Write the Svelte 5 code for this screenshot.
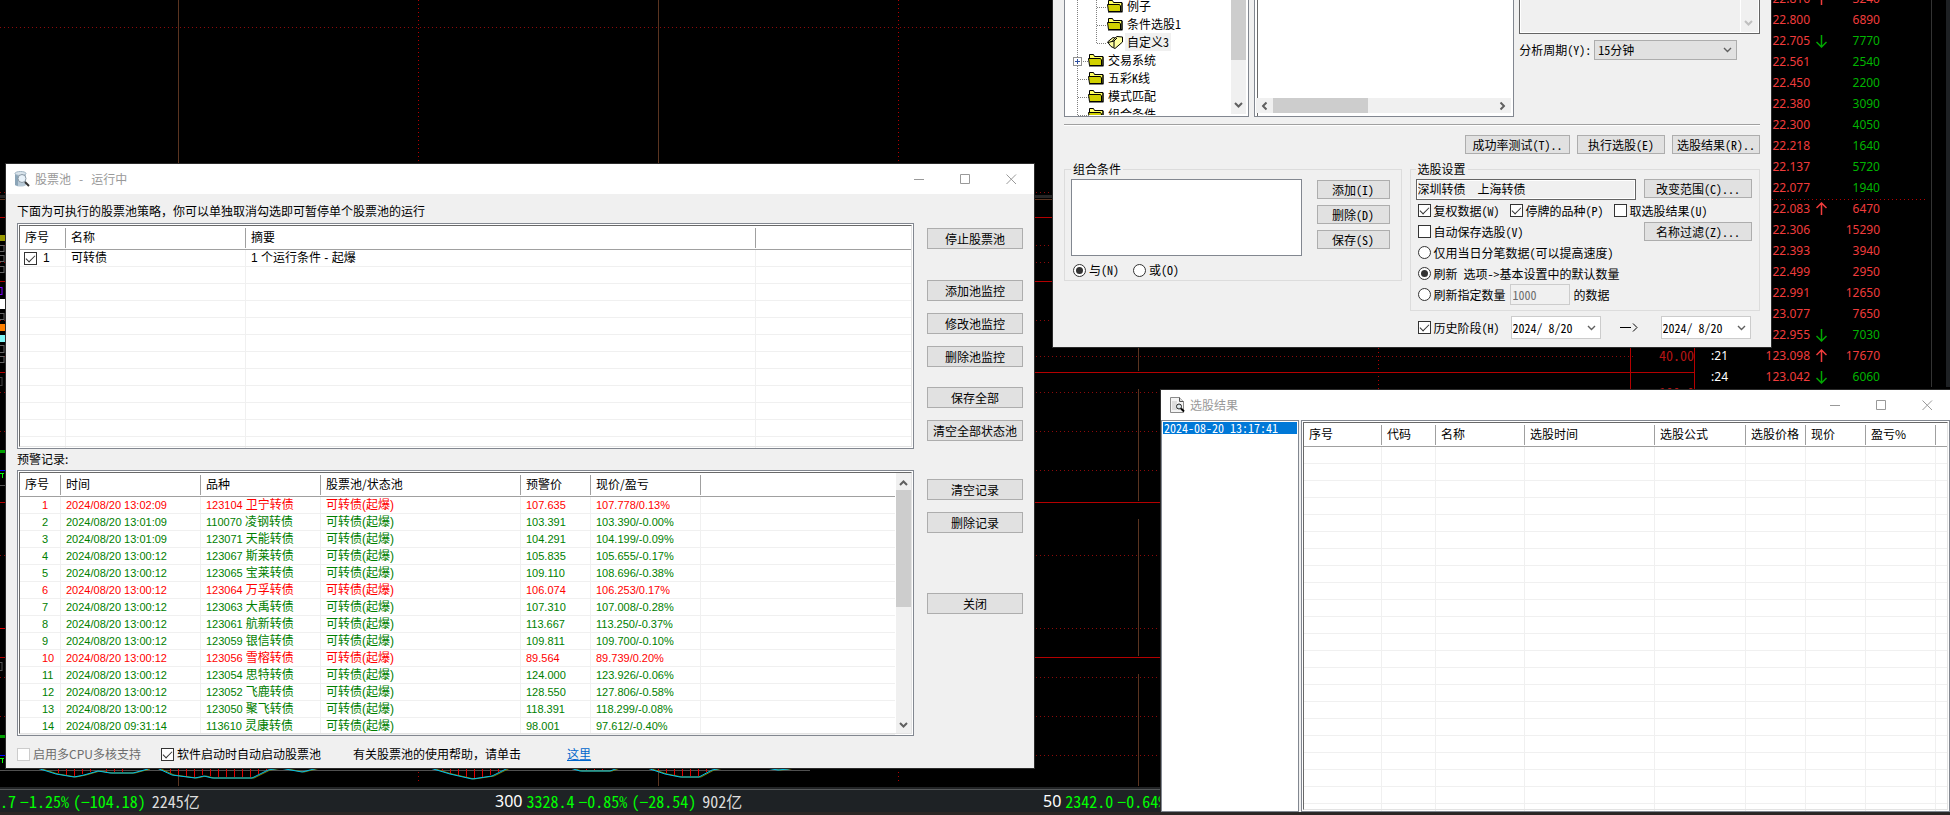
<script>
  const quotes = [
    { price: "122.816", dir: "up", vol: 3240, up: true },
    { price: "122.800", vol: 6890, up: true },
    { price: "122.705", dir: "down", vol: 7770 },
    { price: "122.561", vol: 2540 },
    { price: "122.450", vol: 2200 },
    { price: "122.380", vol: 3090 },
    { price: "122.300", vol: 4050 },
    { price: "122.218", vol: 1640 },
    { price: "122.137", vol: 5720 },
    { price: "122.077", vol: 1940 },
    { price: "122.083", dir: "up", vol: 6470, up: true },
    { price: "122.306", vol: 15290, up: true },
    { price: "122.393", vol: 3940, up: true },
    { price: "122.499", vol: 2950, up: true },
    { price: "122.991", vol: 12650, up: true },
    { price: "123.077", vol: 7650, up: true },
    { price: "122.955", dir: "down", vol: 7030 },
    { time: ":21", price: "123.098", dir: "up", vol: 17670, up: true },
    { time: ":24", price: "123.042", dir: "down", vol: 6060 },
  ];

  const alerts = [
    ["2024/08/20 13:02:09", "123104", "卫宁转债", "107.635", "107.778/0.13%", true],
    ["2024/08/20 13:01:09", "110070", "凌钢转债", "103.391", "103.390/-0.00%"],
    ["2024/08/20 13:01:09", "123071", "天能转债", "104.291", "104.199/-0.09%"],
    ["2024/08/20 13:00:12", "123067", "斯莱转债", "105.835", "105.655/-0.17%"],
    ["2024/08/20 13:00:12", "123065", "宝莱转债", "109.110", "108.696/-0.38%"],
    ["2024/08/20 13:00:12", "123064", "万孚转债", "106.074", "106.253/0.17%", true],
    ["2024/08/20 13:00:12", "123063", "大禹转债", "107.310", "107.008/-0.28%"],
    ["2024/08/20 13:00:12", "123061", "航新转债", "113.667", "113.250/-0.37%"],
    ["2024/08/20 13:00:12", "123059", "银信转债", "109.811", "109.700/-0.10%"],
    ["2024/08/20 13:00:12", "123056", "雪榕转债", "89.564", "89.739/0.20%", true],
    ["2024/08/20 13:00:12", "123054", "思特转债", "124.000", "123.926/-0.06%"],
    ["2024/08/20 13:00:12", "123052", "飞鹿转债", "128.550", "127.806/-0.58%"],
    ["2024/08/20 13:00:12", "123050", "聚飞转债", "118.391", "118.299/-0.08%"],
    ["2024/08/20 09:31:14", "113610", "灵康转债", "98.001", "97.612/-0.40%"],
  ];

  const buttonGroups = [
    ["停止股票池"],
    ["添加池监控", "修改池监控", "删除池监控"],
    ["保存全部", "清空全部状态池"],
    ["清空记录", "删除记录"],
    ["关闭"],
  ];

  const tree = [
    { text: "例子", level: 2 },
    { text: "条件选股1", level: 2 },
    { text: "自定义3", level: 2, open: true },
    { text: "交易系统", level: 1 },
    { text: "五彩K线", level: 1 },
    { text: "模式匹配", level: 1 },
    { text: "组合条件", level: 1 },
  ];

  const resultCols = ["序号", "代码", "名称", "选股时间", "选股公式", "选股价格", "现价", "盈亏%", ""];

  // background chart
  const dotted = [27, 192, 245, 262, 320, 356, 392, 431, 470, 555, 628, 677, 716, 755];
  const solid = [217, 281, 372, 502, 657];
  const dayLines = [178, 658, 1138];
  const halfLines = [418, 898, 1378];
  const daySpans = [[0, 195], [347, 371], [389, 501], [519, 656], [674, 786]];
  const macd = [
    "37,768 56,774 74,777 84,775 98,771 110,773 133,773 148,769",
    "157,768 172,775 195,778 204,776 212,778 252,778 268,770 280,768 302,772 318,768",
    "430,768 450,774 472,779 492,776 508,768",
    "570,768 580,771 610,771 618,768",
    "647,768 665,774 680,777 699,777 712,770 722,768",
    "766,768 778,770 788,769 792,768",
  ];
  const macdBars = [
    [58, 773], [66, 775], [74, 776], [82, 774], [90, 772], [106, 772], [114, 772], [122, 772],
    [170, 773], [178, 775], [186, 777], [194, 777], [202, 775], [210, 776], [218, 777], [226, 777],
    [234, 777], [242, 777], [250, 777], [258, 774], [266, 771], [442, 771], [450, 773], [458, 775],
    [466, 777], [474, 778], [482, 777], [490, 775], [498, 772], [586, 770], [594, 770], [602, 770],
    [658, 771], [666, 773], [674, 775], [682, 776], [690, 776], [698, 776], [706, 772],
  ];
  const marks = [
    [245, 7, "#666"], [255, 7, "#666"], [266, 7, "#666"], [287, 8, "#7a00ff"], [313, 7, "#666"],
    [345, 8, "#666"], [356, 7, "#666"], [377, 9, "#444"], [662, 9, "#555"],
  ];
  const blocks = [
    [235, 6, "#999900"], [299, 10, "#ffffff"], [324, 7, "#ff8000"], [335, 7, "#7ff6f6"],
    [450, 3, "#00a000"], [470, 1, "#0000ff"], [735, 3, "#00a000"], [755, 1, "#0000ff"],
  ];

  let poolOn = $state(true);
  let autoStart = $state(true);
  let combine = $state("and");
  let adjusted = $state(true);
  let suspended = $state(true);
  let fromResult = $state(false);
  let autoSave = $state(false);
  let dataMode = $state("default");
  let history = $state(true);
</script>

{#snippet chevron(dir)}
  <svg class="chevron {dir}" width="9" height="6" viewBox="0 0 9 6"><path d="M1 1L4.500 4.500L8 1" fill="none" stroke="currentColor" stroke-width="2" /></svg>
{/snippet}

{#snippet controls()}
  <div class="controls">
    <button aria-label="最小化"><svg width="11" height="11"><path d="M0 5.500H10" /></svg></button>
    <button aria-label="最大化"><svg width="11" height="11"><path d="M.5 .5H9.500V9.500H.5Z" /></svg></button>
    <button aria-label="关闭窗口"><svg width="11" height="11"><path d="M.5 .5L10 10M10 .5L.5 10" /></svg></button>
  </div>
{/snippet}

<main class="desktop">
  <section class="market">
    <svg class="chart" width="100%" height="100%">
      {#each dotted as y}
        <line x1="0" x2="1633" y1={y + 0.5} y2={y + 0.5} stroke="#8c0a0a" stroke-dasharray="1 3" />
      {/each}
      <rect x="0" y="195" width="1700" height="3" fill="#262626" />
      <line x1="0" x2="1694" y1="199.5" y2="199.5" stroke="#5a3420" />
      {#each solid as y}
        <line x1="0" x2="1694" y1={y + 0.5} y2={y + 0.5} stroke="#b40000" />
      {/each}
      {#each dayLines as x}
        {#each daySpans as [a, b]}
          <line x1={x + 0.5} x2={x + 0.5} y1={a} y2={b} stroke="#5a3420" />
        {/each}
      {/each}
      {#each halfLines as x}
        <line x1={x + 0.5} x2={x + 0.5} y1="0" y2="783" stroke="#b40000" stroke-dasharray="1 3" />
      {/each}
      <path d="M1630.500 340V780M1694.500 340V780" stroke="#b40000" />
      <path d="M1772 199.500H1928" stroke="#b40000" stroke-dasharray="1 3" />
      <path d="M0 770.500H810" stroke="#505050" />
      {#each macdBars as [x, y]}
        <line x1={x + 0.5} x2={x + 0.5} y1="768" y2={y} stroke="#e00000" />
      {/each}
      {#each macd as points}
        <polyline {points} fill="none" stroke="#808000" transform="translate(2 0)" />
        <polyline {points} fill="none" stroke="#00c0f0" />
      {/each}
      {#each marks as [y, h, color]}
        <rect x="-4" y={y + 0.5} width={color === "#666" ? 8 : 6} height={h - 1} fill="none" stroke={color} />
      {/each}
      {#each blocks as [y, h, color]}
        <rect x="0" {y} width="5" height={h} fill={color} />
      {/each}
      <path d="M0 473.500H4M2.500 473V478M0 758.500H4M2.500 758V763" stroke="#00ff00" />
      <path d="M0 485.500H5M0 770.500H5" stroke="#555" />
      <path d="M0 628.500H5" stroke="#e00000" />
      <text x="1659" y="361" class="axis">40.00</text>
      <text x="1659" y="398" class="axis">100.0</text>
    </svg>
    <table class="quotes">
      <tbody>
        {#each quotes as q}
          <tr>
            <td class="time">{q.time ?? ""}</td>
            <td class="price">{q.price}</td>
            <td class="dir">
              {#if q.dir}
                <svg class={q.dir} width="11" height="14" viewBox="0 0 11 14"><path d="M5.500 1V13M.5 6L5.500 1L10.500 6" /></svg>
              {/if}
            </td>
            <td class={q.up ? "vol up" : "vol down"}>{q.vol}</td>
          </tr>
        {/each}
      </tbody>
    </table>
  </section>

  <footer class="indices">
    <div><span class="fall">.7</span><span class="fall">−1.25%</span><span class="fall">(−104.18)</span><span class="amount">2245亿</span></div>
    <div><b>300</b><span class="fall">3328.4</span><span class="fall">−0.85%</span><span class="fall">(−28.54)</span><span class="amount">902亿</span></div>
    <div><b>50</b><span class="fall">2342.0</span><span class="fall">−0.64%</span></div>
  </footer>

  <section class="window pool">
    <header>
      <svg width="16" height="16" viewBox="0 0 16 16">
        <path d="M1 3V14C3 16 10 16 12 14V3Z" fill="#b9cbd8" />
        <path d="M1 3V14L4 15V4Z" fill="#8ba5b8" />
        <ellipse cx="6.500" cy="2.500" rx="5.500" ry="2" fill="#d9e4ec" stroke="#9fb3c2" />
        <circle cx="8" cy="7.500" r="4" fill="#e8f2fa" stroke="#8b98a3" />
        <path d="M11 11L15 15" stroke="#333" stroke-width="2" />
      </svg>
      <h1>股票池 &nbsp;&nbsp;- &nbsp;&nbsp;运行中</h1>
      {@render controls()}
    </header>
    <div class="pool-body">
      <div>
        <p class="hint">下面为可执行的股票池策略，你可以单独取消勾选即可暂停单个股票池的运行</p>
        <div class="listview strategies">
          <table>
            <colgroup><col class="w46" /><col class="w180" /><col class="w510" /><col /></colgroup>
            <thead><tr><th>序号</th><th>名称</th><th>摘要</th><th></th></tr></thead>
            <tbody>
              <tr>
                <td class="tick"><label><input type="checkbox" bind:checked={poolOn} />1</label></td>
                <td>可转债</td>
                <td>1 个运行条件 - 起爆</td>
                <td></td>
              </tr>
              {#each Array(11) as _}
                <tr><td></td><td></td><td></td><td></td></tr>
              {/each}
            </tbody>
          </table>
        </div>
        <p class="caption">预警记录:</p>
        <div class="listview records">
          <table>
            <colgroup><col class="w41" /><col class="w140" /><col class="w120" /><col class="w200" /><col class="w70" /><col class="w110" /><col /></colgroup>
            <thead><tr><th>序号</th><th>时间</th><th>品种</th><th>股票池/状态池</th><th>预警价</th><th>现价/盈亏</th><th></th></tr></thead>
            <tbody>
              {#each alerts as [time, code, name, alertPrice, now, rise], i}
                <tr class={rise ? "rise" : "drop"}>
                  <td class="seq">{i + 1}</td>
                  <td>{time}</td>
                  <td>{code} <span>{name}</span></td>
                  <td><span>可转债(起爆)</span></td>
                  <td>{alertPrice}</td>
                  <td>{now}</td>
                  <td></td>
                </tr>
              {/each}
            </tbody>
          </table>
          <div class="vscroll">
            {@render chevron("up")}
            <i></i>
            {@render chevron("down")}
          </div>
        </div>
      </div>
      <div class="actions">
        {#each buttonGroups as group}
          <div>
            {#each group as name}<button class="btn">{name}</button>{/each}
          </div>
        {/each}
      </div>
    </div>
    <div class="options">
      <label class="off"><input type="checkbox" disabled />启用多CPU多核支持</label>
      <label class="auto"><input type="checkbox" bind:checked={autoStart} />软件启动时自动启动股票池</label>
      <span class="help">有关股票池的使用帮助，请单击</span>
      <a href="#help">这里</a>
    </div>
  </section>

  <section class="window picker">
    <div class="panes">
      <div class="tree">
        <svg class="guides" width="60" height="120">
          <path d="M12.500 0V120M31.500 0V44M32 7.500H42M32 25.500H42M32 43.500H42M18 61.500H24M13 79.500H24M13 97.500H24M13 115.500H24" />
        </svg>
        <svg class="expander" width="9" height="9"><rect x=".5" y=".5" width="8" height="8" fill="#fff" stroke="#919191" /><path d="M2 4.500H7M4.500 2V7" stroke="#3050a0" /></svg>
        <ul>
          {#each tree as node}
            <li class="level{node.level}">
              {#if node.open}
                <svg width="16" height="13" viewBox="0 0 16 13">
                  <path d="M.5 6L6 1.500L8 2L10 .5L15.500 1V6L8 12.500L4 10.500Z" fill="#ffffa0" stroke="#000" />
                  <path d="M1 6.500L7 5V11.500M7 5L10 2M5 5.500L8 2" fill="none" stroke="#000" />
                </svg>
              {:else}
                <svg width="16" height="13" viewBox="0 0 16 13">
                  <path d="M1.500 4V.5H5.500L6.500 2.500H15V11.500H13" fill="#ffff60" stroke="#000" />
                  <path d="M.5 4.500H12.500L13.500 6V11.500H1.500Z" fill="#d0d000" stroke="#000" />
                  <path d="M1 12H15.500M15 3V12" stroke="#000" />
                </svg>
              {/if}
              <span class:selected={node.open}>{node.text}</span>
            </li>
          {/each}
        </ul>
        <div class="vscroll">
          <i></i>
          {@render chevron("down")}
        </div>
      </div>
      <div class="formula">
        <div class="hscroll">
          {@render chevron("left")}
          <i></i>
          {@render chevron("right")}
        </div>
      </div>
      <div class="side">
        <div class="notes">{@render chevron("down")}</div>
        <label class="period">分析周期(Y):
          <span class="drop-down">
            <select><option>15分钟</option></select>
            {@render chevron("thin")}
          </span>
        </label>
      </div>
    </div>
    <div class="rule"></div>
    <div class="run">
      <button class="btn test">成功率测试(T)..</button>
      <button class="btn">执行选股(E)</button>
      <button class="btn">选股结果(R)..</button>
    </div>
    <div class="settings">
      <fieldset>
        <legend>组合条件</legend>
        <div class="combo">
          <div class="box"></div>
          <div class="combo-buttons">
            <button class="btn">添加(I)</button>
            <button class="btn">删除(D)</button>
            <button class="btn">保存(S)</button>
          </div>
        </div>
        <div class="radios">
          <label><input type="radio" value="and" bind:group={combine} />与(N)</label>
          <label><input type="radio" value="or" bind:group={combine} />或(O)</label>
        </div>
      </fieldset>
      <div>
        <fieldset class="scope">
          <legend>选股设置</legend>
          <div class="range">
            <input type="text" aria-label="选股范围" value="深圳转债　上海转债" readonly />
            <button class="btn">改变范围(C)...</button>
          </div>
          <div class="line">
            <label><input type="checkbox" bind:checked={adjusted} />复权数据(W)</label>
            <label><input type="checkbox" bind:checked={suspended} />停牌的品种(P)</label>
            <label><input type="checkbox" bind:checked={fromResult} />取选股结果(U)</label>
          </div>
          <div class="line spread">
            <label><input type="checkbox" bind:checked={autoSave} />自动保存选股(V)</label>
            <button class="btn">名称过滤(Z)...</button>
          </div>
          <div class="line">
            <label><input type="radio" value="tick" bind:group={dataMode} />仅用当日分笔数据(可以提高速度)</label>
          </div>
          <div class="line">
            <label><input type="radio" value="default" bind:group={dataMode} />刷新 选项-&gt;基本设置中的默认数量</label>
          </div>
          <div class="line count">
            <label><input type="radio" value="count" bind:group={dataMode} />刷新指定数量</label>
            <input type="text" aria-label="数量" value="1000" disabled />
            <span>的数据</span>
          </div>
        </fieldset>
        <div class="dates">
          <label><input type="checkbox" bind:checked={history} />历史阶段(H)</label>
          <span class="drop-down">
            <select aria-label="开始日期"><option>2024/ 8/20</option></select>
            {@render chevron("thin")}
          </span>
          <svg class="to" width="18" height="9"><path d="M0 4.500H11M13 .5L17 4.500L13 8.500" /></svg>
          <span class="drop-down">
            <select aria-label="结束日期"><option>2024/ 8/20</option></select>
            {@render chevron("thin")}
          </span>
        </div>
      </div>
    </div>
  </section>

  <section class="window results">
    <header>
      <svg width="16" height="16" viewBox="0 0 16 16">
        <path d="M1.500 .5H10.500L14.500 4.500V15.500H1.500Z" fill="#f4f4f4" stroke="#8a8a8a" />
        <path d="M10.500 .5V4.500H14.500" fill="#ddd" stroke="#555" />
        <path d="M3 4H8V13H3Z" fill="#ddd" />
        <circle cx="10" cy="9.500" r="2.500" fill="#dfe8ec" stroke="#222" />
        <path d="M12 11.500L15 14.500" stroke="#000" stroke-width="2" />
      </svg>
      <h1>选股结果</h1>
      {@render controls()}
    </header>
    <div class="results-body">
      <ul class="runs"><li>2024-08-20 13:17:41</li></ul>
      <div class="listview">
        <table>
          <colgroup><col class="w78" /><col class="w54" /><col class="w89" /><col class="w130" /><col class="w91" /><col class="w60" /><col class="w60" /><col class="w70" /><col /></colgroup>
          <thead><tr>{#each resultCols as name}<th>{name}</th>{/each}</tr></thead>
          <tbody>
            {#each Array(22) as _}
              <tr>{#each resultCols as _}<td></td>{/each}</tr>
            {/each}
          </tbody>
        </table>
      </div>
    </div>
  </section>
</main>

<style>
  :global(body) {
    margin: 0;
    background: #000;
  }

  .desktop {
    position: relative;
    display: flex;
    flex-direction: column;
    height: 100vh;
    overflow: hidden;
    background: #000;
    color: #000;
    font-family: "Noto Sans CJK SC", sans-serif;
    font-size: 12px;
    line-height: 16px;
  }

  .desktop *, .desktop *::before, .desktop *::after {
    box-sizing: border-box;
  }

  button, input, select {
    font: inherit;
    color: inherit;
    margin: 0;
  }

  h1, p, ul {
    margin: 0;
    padding: 0;
    font-size: 12px;
    font-weight: normal;
    list-style: none;
  }

  svg {
    flex: none;
    display: block;
  }

  /* market behind the dialogs */
  .market {
    position: relative;
    flex: 1;
    min-height: 0;
    display: flex;
    justify-content: flex-end;
    overflow: hidden;
  }

  .chart {
    position: absolute;
    inset: 0;
  }

  .axis {
    fill: #b41414;
    font-size: 14px;
    font-feature-settings: "hwid";
  }

  .quotes {
    position: relative;
    align-self: flex-start;
    width: 250px;
    margin-top: -12px;
    padding-right: 70px;
    border-collapse: separate;
    border-spacing: 0;
    font-family: "Noto Sans", sans-serif;
    box-shadow: inset -4px 0 #1e2124, inset -18px 0 #000, inset -19px 0 #333;
  }

  .quotes td {
    height: 21px;
    padding: 0;
    text-align: right;
  }

  .quotes .time {
    width: 28px;
    color: #fff;
  }

  .quotes .price {
    width: 82px;
    color: #f03c3c;
  }

  .quotes .dir {
    width: 18px;
    padding-left: 6px;
  }

  .quotes path {
    fill: none;
    stroke: #f03c3c;
    stroke-width: 1.5;
  }

  .quotes svg.down {
    transform: rotate(180deg);
  }

  .quotes svg.down path {
    stroke: #00a800;
  }

  .vol.up {
    color: #f03c3c;
  }

  .vol.down {
    color: #00b400;
  }

  .indices {
    display: grid;
    grid-template-columns: 495px 548px 1fr;
    height: 28px;
    border-top: 2px solid #222426;
    border-bottom: 3px solid #2b2624;
    background: #1e2225;
    box-shadow: inset 0 1px #55585a;
    color: #ddd;
    font-size: 16px;
    line-height: 24px;
    font-feature-settings: "hwid";
  }

  .indices div {
    display: flex;
    gap: 4px;
    white-space: nowrap;
    overflow: hidden;
  }

  .indices b {
    font-family: "Noto Sans", sans-serif;
    font-weight: normal;
    color: #fff;
  }

  .indices .fall {
    color: #00ff00;
  }

  .indices .amount {
    margin-left: 2px;
  }

  /* window frame */
  .window {
    position: absolute;
    background: #f0f0f0;
    box-shadow: 0 0 0 1px #2b2b2b;
  }

  .window header {
    display: flex;
    align-items: center;
    height: 30px;
    padding-left: 8px;
    gap: 5px;
    background: #fff;
    color: #999;
  }

  .controls {
    display: flex;
    margin-left: auto;
    height: 100%;
  }

  .controls button {
    display: grid;
    place-items: center;
    width: 46px;
    padding: 0;
    border: 0;
    background: none;
  }

  .controls path {
    fill: none;
    stroke: #999;
  }

  .btn {
    padding: 0;
    height: 21px;
    border: 1px solid #adadad;
    background: #e1e1e1;
    line-height: 17px;
    white-space: nowrap;
  }

  label {
    display: flex;
    align-items: center;
    gap: 3px;
    white-space: nowrap;
  }

  input[type="checkbox"], input[type="radio"] {
    appearance: none;
    position: relative;
    flex: none;
    width: 13px;
    height: 13px;
    border: 1px solid #333;
    background: #fff;
  }

  input[type="radio"] {
    border-radius: 50%;
  }

  input[type="checkbox"]:checked::after {
    content: "";
    position: absolute;
    left: 1px;
    top: 2px;
    width: 9px;
    height: 5px;
    border: solid #333;
    border-width: 0 0 1px 1px;
    transform: rotate(-45deg);
  }

  input[type="radio"]:checked::after {
    content: "";
    position: absolute;
    inset: 2px;
    border-radius: 50%;
    background: #333;
  }

  input[type="checkbox"]:disabled {
    border-color: #ccc;
  }

  .chevron {
    color: #606060;
  }

  .chevron.up {
    transform: rotate(180deg);
  }

  .chevron.left {
    transform: rotate(90deg);
  }

  .chevron.right {
    transform: rotate(-90deg);
  }

  .vscroll {
    display: flex;
    flex-direction: column;
    justify-content: space-between;
    align-items: center;
    flex: none;
    width: 15px;
    background: #f0f0f0;
  }

  .vscroll i, .hscroll i {
    background: #cdcdcd;
  }

  /* list views */
  .listview {
    position: relative;
    display: flex;
    border: 1px solid #828790;
    padding: 1px;
    background: #fff;
    overflow: hidden;
  }

  .listview::after {
    content: "";
    position: absolute;
    inset: 1px;
    border: 1px solid;
    border-color: #696969 #e3e3e3 #e3e3e3 #696969;
    pointer-events: none;
  }

  .listview table {
    flex: 1;
    min-width: 0;
    align-self: flex-start;
    margin: 1px;
    table-layout: fixed;
    border-collapse: separate;
    border-spacing: 0;
  }

  .listview th {
    height: 24px;
    padding: 1px 0 2px 5px;
    border-bottom: 1px solid #a0a0a0;
    background: linear-gradient(#a0a0a0, #a0a0a0) right 2px / 1px 20px no-repeat;
    font-weight: normal;
    text-align: left;
    white-space: nowrap;
  }

  .listview th:last-child {
    background: none;
  }

  .listview td {
    height: 17px;
    padding: 0 0 0 5px;
    border-right: 1px solid #f0f0f0;
    border-bottom: 1px solid #f0f0f0;
    line-height: 16px;
    white-space: nowrap;
    overflow: hidden;
    font-family: "Liberation Sans", "Noto Sans CJK SC", sans-serif;
  }

  .listview td:last-child {
    border-right: 0;
  }

  .w41 { width: 41px; }
  .w46 { width: 46px; }
  .w54 { width: 54px; }
  .w60 { width: 60px; }
  .w70 { width: 70px; }
  .w78 { width: 78px; }
  .w89 { width: 89px; }
  .w91 { width: 91px; }
  .w110 { width: 110px; }
  .w120 { width: 120px; }
  .w130 { width: 130px; }
  .w140 { width: 140px; }
  .w180 { width: 180px; }
  .w200 { width: 200px; }
  .w510 { width: 510px; }

  /* stock pool */
  .pool {
    left: 6px;
    right: 916px;
    top: 164px;
  }

  .pool-body {
    display: grid;
    grid-template-columns: 1fr 96px;
    gap: 13px;
    padding: 0 11px;
  }

  .hint {
    padding: 9px 0 4px;
  }

  .caption {
    padding: 2px 0 3px;
  }

  .strategies {
    height: 226px;
  }

  .records {
    height: 266px;
  }

  .records td {
    font-size: 11px;
  }

  .records td span {
    font-size: 12px;
  }

  .listview td.tick {
    padding-left: 4px;
  }

  .tick label {
    gap: 6px;
    height: 16px;
  }

  .listview td.seq {
    padding-left: 22px;
  }

  .rise {
    color: #f00;
  }

  .drop {
    color: #008000;
  }

  .records .vscroll {
    justify-content: flex-start;
    padding: 8px 0 6px;
    margin-right: 1px;
  }

  .records .vscroll i {
    width: 15px;
    height: 117px;
    margin-top: 4px;
  }

  .records .vscroll :global(.down) {
    margin-top: auto;
  }

  .actions {
    padding-top: 34px;
  }

  .actions div {
    display: flex;
    flex-direction: column;
    gap: 12px;
    margin-bottom: 31px;
  }

  .actions div:nth-child(2) {
    margin-bottom: 20px;
  }

  .actions div:nth-child(3) {
    margin-bottom: 38px;
  }

  .actions div:nth-child(4) {
    margin-bottom: 60px;
  }

  .options {
    display: flex;
    padding: 9px 11px 5px;
    line-height: 18px;
  }

  .options .off {
    width: 144px;
    color: #6d6d6d;
  }

  .options .auto {
    width: 192px;
  }

  .options .help {
    width: 214px;
  }

  .options a {
    color: #0066cc;
  }

  /* stock picker */
  .picker {
    left: 1053px;
    right: 179px;
    top: 0;
    padding: 0 11px 8px;
    font-feature-settings: "hwid";
  }

  .picker .btn {
    height: 19px;
    line-height: 16px;
  }

  .panes {
    display: grid;
    grid-template-columns: 185fr 261fr 241fr;
    gap: 5px;
  }

  .tree, .formula {
    position: relative;
    display: flex;
    height: 117px;
    border: solid #828790;
    border-width: 0 1px 1px;
    background: #fff;
    overflow: hidden;
  }

  .tree {
    padding: 0 2px 2px 0;
  }

  .guides, .expander {
    position: absolute;
    left: 0;
    top: 0;
  }

  .guides path {
    fill: none;
    stroke: #808080;
    stroke-dasharray: 1 1;
  }

  .expander {
    left: 8px;
    top: 57px;
  }

  .tree ul {
    position: relative;
    flex: 1;
    height: 118px;
    margin-top: -3px;
    overflow: hidden;
  }

  .tree li {
    display: flex;
    align-items: center;
    gap: 2px;
    height: 18px;
    padding-left: 23px;
  }

  .tree li.level2 {
    padding-left: 42px;
  }

  .tree span {
    padding: 0 2px;
    line-height: 18px;
  }

  .tree .selected {
    background: #f0f0f0;
  }

  .tree .vscroll {
    padding-bottom: 6px;
  }

  .tree .vscroll i {
    width: 15px;
    height: 60px;
  }

  .formula {
    align-items: flex-end;
    padding: 0 2px 3px 1px;
    box-shadow: inset 2px 0 #fff, inset 3px 0 #696969;
  }

  .hscroll {
    display: flex;
    align-items: center;
    flex: 1;
    height: 15px;
    padding: 0 4px;
    background: #f0f0f0;
  }

  .hscroll i {
    width: 95px;
    height: 15px;
    margin: 0 auto 0 4px;
  }

  .notes {
    display: flex;
    align-items: flex-end;
    justify-content: flex-end;
    height: 34px;
    padding: 0 6px 7px 0;
    border: solid #646464;
    border-width: 0 1px 1px;
    box-shadow: inset 1px 0 #fff, inset -1px -1px #fff, inset -18px 0 #f0f0f0, inset -19px 0 #fff;
  }

  .notes :global(.chevron) {
    color: #bfbfbf;
  }

  .period {
    margin-top: 6px;
  }

  .drop-down {
    position: relative;
    display: flex;
  }

  .drop-down :global(.chevron) {
    position: absolute;
    right: 5px;
    top: 50%;
    margin-top: -3px;
    pointer-events: none;
  }

  .drop-down :global(.chevron path) {
    stroke-width: 1.4;
  }

  select {
    appearance: none;
    width: 90px;
    height: 23px;
    padding: 0 0 0 1px;
    border: 1px solid #ccc;
    border-radius: 0;
    background: #fff;
  }

  .period select {
    width: 143px;
    height: 20px;
    padding-left: 3px;
    border-color: #adadad;
    background: #e1e1e1;
  }

  .rule {
    height: 2px;
    margin-top: 7px;
    background: #a0a0a0;
    border-bottom: 1px solid #fff;
  }

  .run {
    display: flex;
    justify-content: flex-end;
    gap: 7px;
    padding-top: 9px;
  }

  .run .btn {
    width: 88px;
  }

  .run .test {
    width: 105px;
  }

  .settings {
    display: grid;
    grid-template-columns: 338fr 351fr;
    gap: 8px;
    align-items: start;
    margin-top: 9px;
  }

  fieldset {
    min-width: 0;
    margin: 0;
    padding: 4px 11px 3px 6px;
    border: 1px solid #dcdcdc;
  }

  legend {
    padding: 0 2px;
    line-height: 12px;
  }

  .combo {
    display: flex;
    gap: 15px;
  }

  .box {
    flex: 1;
    height: 77px;
    border: 1px solid #828790;
    background: #fff;
  }

  .combo-buttons {
    display: flex;
    flex-direction: column;
    gap: 6px;
    width: 73px;
    padding-top: 1px;
  }

  .radios {
    display: flex;
    gap: 14px;
    margin-top: 7px;
    padding-left: 2px;
    line-height: 14px;
  }

  .scope {
    padding: 4px 7px 5px 5px;
  }

  .range {
    display: flex;
    gap: 8px;
  }

  .range input {
    flex: 1;
    min-width: 0;
    height: 21px;
    padding: 0 1px 2px;
    border: 1px solid #646464;
    background: #f0f0f0;
    box-shadow: inset 0 0 0 1px #fff;
    font-feature-settings: normal;
  }

  .scope .btn {
    width: 108px;
  }

  .line {
    display: flex;
    align-items: center;
    gap: 10px;
    height: 21px;
    padding-left: 2px;
  }

  .spread {
    justify-content: space-between;
  }

  .count {
    gap: 4px;
  }

  .count input[type="text"] {
    width: 60px;
    height: 21px;
    padding: 0 2px;
    border: 1px solid #ccc;
    background: #f0f0f0;
    color: #6d6d6d;
  }

  .dates {
    display: flex;
    align-items: center;
    margin-top: 5px;
    padding-left: 8px;
  }

  .dates label {
    width: 93px;
  }

  .to {
    margin: 0 23px 0 19px;
  }

  .to path {
    fill: none;
    stroke: #000;
  }

  /* results */
  .results {
    left: 1161px;
    right: 0;
    top: 390px;
    bottom: 3px;
    display: flex;
    flex-direction: column;
  }

  .results header {
    flex: none;
  }

  .results-body {
    display: grid;
    grid-template-columns: 138px 1fr;
    gap: 2px;
    flex: 1;
    min-height: 0;
  }

  .runs {
    padding: 1px;
    border: 1px solid #828790;
    background: #fff;
    font-feature-settings: "hwid";
  }

  .runs li {
    padding-left: 1px;
    background: #0078d7;
    color: #fff;
    line-height: 12px;
  }
</style>
